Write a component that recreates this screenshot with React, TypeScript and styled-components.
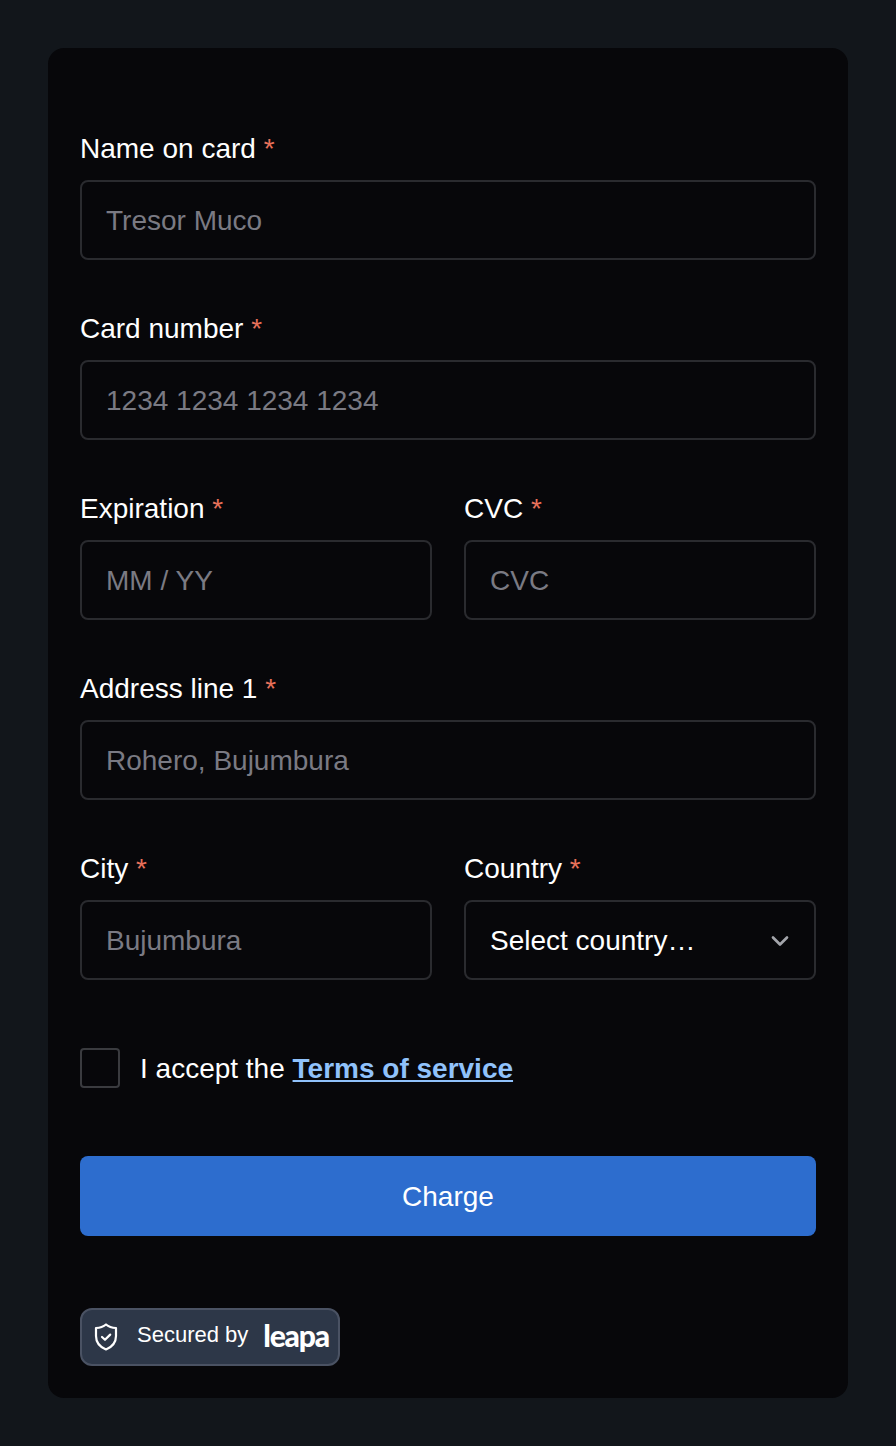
import styled, { createGlobalStyle } from "styled-components";
import { FC } from "react";
import { ChevronDown } from "lucide-react";

interface IField {
  label: string;
  placeholder: string;
}

const GlobalStyle = createGlobalStyle`
  * {
    box-sizing: border-box;
  }
  body {
    margin: 0;
    background: #12161b;
    font-family: "Liberation Sans", Arial, sans-serif;
  }
`;

const Field: FC<IField> = ({ label, placeholder }) => {
  return (
    <FieldWrapper>
      <Label>
        {label} <Star>*</Star>
      </Label>
      <Input placeholder={placeholder} />
    </FieldWrapper>
  );
};

export default function App() {
  return (
    <>
      <GlobalStyle />
      <Page>
        <Card>
          <Form>
            <Field label="Name on card" placeholder="Tresor Muco" />
            <Field label="Card number" placeholder="1234 1234 1234 1234" />
            <Row>
              <Field label="Expiration" placeholder="MM / YY" />
              <Field label="CVC" placeholder="CVC" />
            </Row>
            <Field label="Address line 1" placeholder="Rohero, Bujumbura" />
            <Row>
              <Field label="City" placeholder="Bujumbura" />
              <FieldWrapper>
                <Label>
                  Country <Star>*</Star>
                </Label>
                <SelectBox>
                  <span>Select country…</span>
                  <ChevronDown size={28} strokeWidth={2.3} color="#a3a5ab" />
                </SelectBox>
              </FieldWrapper>
            </Row>
          </Form>
          <Terms>
            <Checkbox type="checkbox" />
            <TermsText>
              I accept the <TermsLink href="#">Terms of service</TermsLink>
            </TermsText>
          </Terms>
          <ChargeButton type="button">Charge</ChargeButton>
          <Badge>
            <ShieldIcon
              viewBox="0 0 24 30"
              fill="none"
              stroke="#fff"
              strokeWidth="2.2"
              strokeLinecap="round"
              strokeLinejoin="round"
            >
              <path d="M12 2.5 C14.5 4.6 18 5.8 22 6 V14 C22 20.5 18 25 12 27.5 C6 25 2 20.5 2 14 V6 C6 5.8 9.5 4.6 12 2.5 Z" />
              <path d="M8 15 L11 17.8 L16.2 12.6" />
            </ShieldIcon>
            <BadgeText>Secured by</BadgeText>
            <Logo>leapa</Logo>
          </Badge>
        </Card>
      </Page>
    </>
  );
}

const Page = styled.div`
  padding: 48px;
  min-height: 1446px;
`;
const Card = styled.div`
  width: 800px;
  height: 1350px;
  background: #07070a;
  border-radius: 16px;
  padding: 88px 32px 32px;
  display: flex;
  flex-direction: column;
`;
const Form = styled.div`
  display: flex;
  flex-direction: column;
  gap: 56px;
`;
const Row = styled.div`
  display: grid;
  grid-template-columns: 1fr 1fr;
  gap: 32px;
`;
const FieldWrapper = styled.div`
  display: flex;
  flex-direction: column;
  gap: 18px;
`;
const Label = styled.label`
  font-size: 28px;
  line-height: 26px;
  color: #fff;
`;
const Star = styled.span`
  color: #e8715a;
`;
const Input = styled.input`
  width: 100%;
  height: 80px;
  padding: 2px 24px 0;
  background: transparent;
  border: 2px solid #2a2b2f;
  border-radius: 8px;
  font-family: inherit;
  font-size: 28px;
  color: #fff;
  outline: none;

  &::placeholder {
    color: #7a7a83;
    opacity: 1;
  }
`;
const SelectBox = styled.div`
  height: 80px;
  padding: 2px 20px 0 24px;
  border: 2px solid #2a2b2f;
  border-radius: 8px;
  display: flex;
  align-items: center;
  justify-content: space-between;
  font-size: 28px;
  color: #fff;
`;
const Terms = styled.div`
  margin-top: 68px;
  display: flex;
  align-items: center;
  gap: 20px;
`;
const Checkbox = styled.input`
  appearance: none;
  margin: 0;
  width: 40px;
  height: 40px;
  border: 2px solid #3a3b3f;
  border-radius: 4px;
  background: transparent;
`;
const TermsText = styled.span`
  font-size: 28px;
  padding-top: 2px;
  color: #fff;
`;
const TermsLink = styled.a`
  color: #90c2fb;
  font-weight: 700;
  text-decoration: underline;
`;
const ChargeButton = styled.button`
  margin-top: 68px;
  height: 80px;
  width: 100%;
  padding: 2px 0 0;
  border: 0;
  border-radius: 8px;
  background: #2d6dce;
  color: #fff;
  font-family: inherit;
  font-size: 28px;
`;
const Badge = styled.div`
  margin-top: 72px;
  width: 260px;
  height: 58px;
  padding: 0 10px 0 12px;
  background: #2d3748;
  border: 2px solid #4a5263;
  border-radius: 12px;
  display: flex;
  align-items: center;
  white-space: nowrap;
`;
const ShieldIcon = styled.svg`
  flex: none;
  width: 24px;
  height: 30px;
`;
const BadgeText = styled.span`
  margin-left: 19px;
  margin-bottom: 4px;
  font-size: 22px;
  color: #fff;
`;
const Logo = styled.span`
  margin-left: 15px;
  margin-bottom: 4px;
  font-family: Lato, sans-serif;
  font-weight: 900;
  font-size: 30px;
  letter-spacing: -1.2px;
  line-height: 1;
  color: #fff;
`;
